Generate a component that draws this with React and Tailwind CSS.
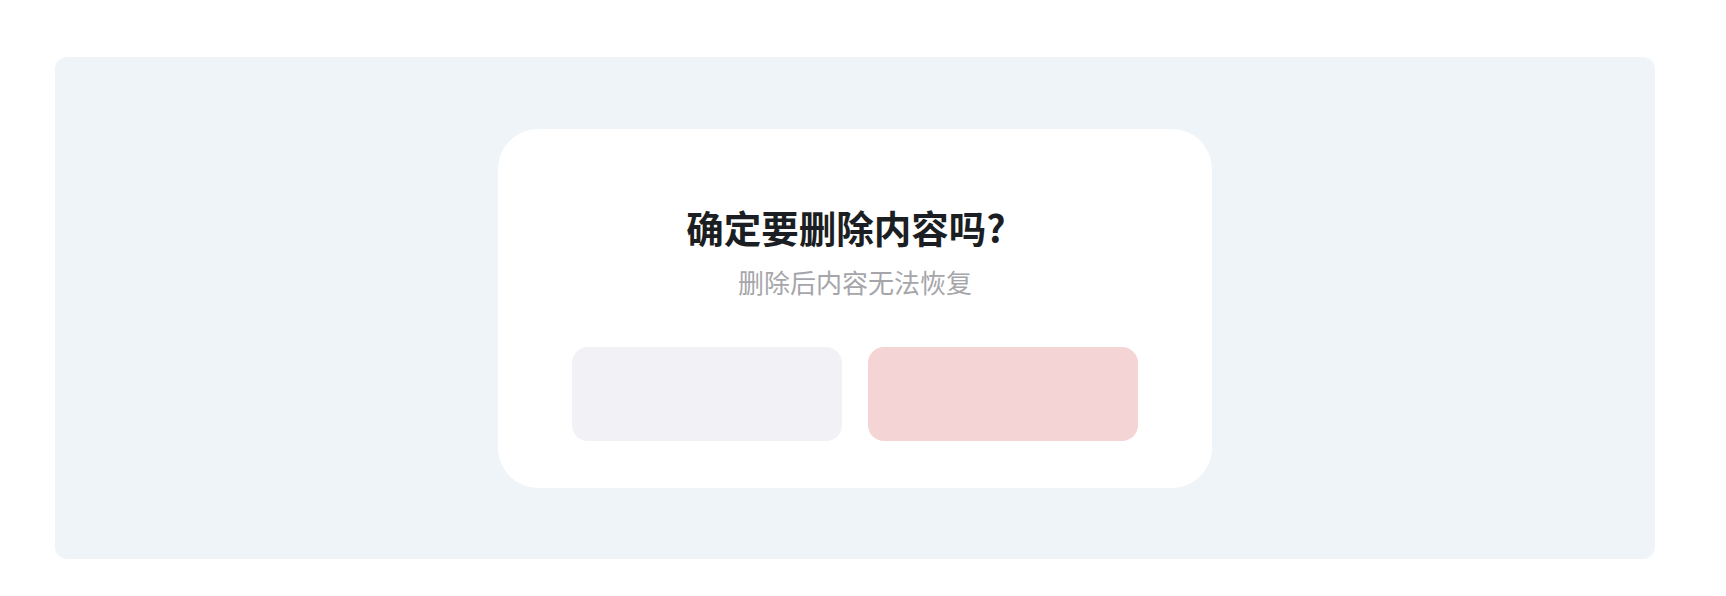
const buttons = [
  { key: 'cancel', className: 'bg-[#f1f1f6]' },
  { key: 'confirm', className: 'bg-[#f5d4d5]' },
];

const App = () => {
  return (
    <div
      className="min-h-screen bg-white pl-[55px] pt-[57px]"
      style={{ fontFamily: '"Noto Sans CJK SC", "Noto Sans", sans-serif' }}
    >
      <div className="flex h-[502px] w-[1600px] items-center justify-center rounded-xl bg-[#eff4f9]">
        <div className="flex w-[714px] flex-col items-center rounded-[40px] bg-white px-[74px] pb-[47px] pt-[76px]">
          <h1 className="pr-[18px] text-[37.5px] font-bold leading-[44px] text-[#1b1e22]">确定要删除内容吗?</h1>
          <p className="mt-[16px] text-[26px] leading-[34px] text-[#a6a6aa]">删除后内容无法恢复</p>
          <div className="mt-[48px] grid w-full grid-cols-2 gap-[26px]">
            {buttons.map((btn) => (
              <button key={btn.key} className={`h-[94px] rounded-2xl ${btn.className}`} />
            ))}
          </div>
        </div>
      </div>
    </div>
  );
};

export default App;
